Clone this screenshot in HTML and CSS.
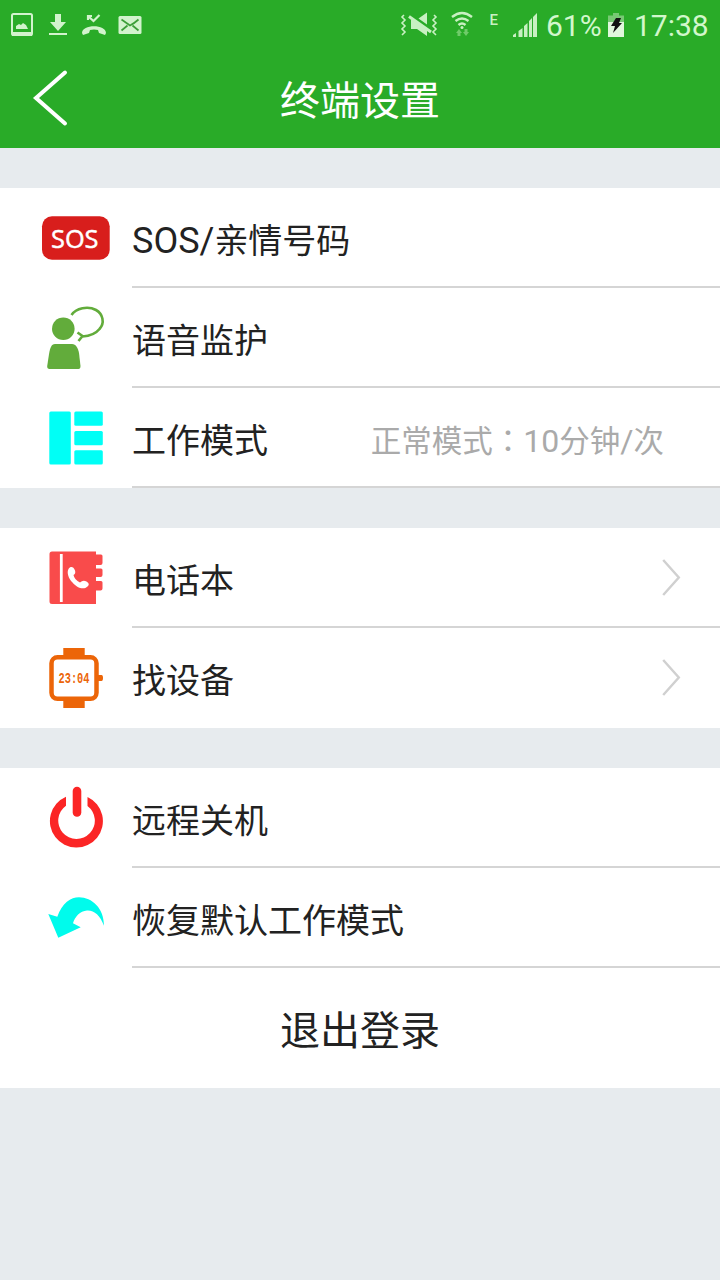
FILE: index.html
```html
<!DOCTYPE html>
<html lang="zh-CN">
<head>
<meta charset="utf-8">
<title>终端设置</title>
<link rel="stylesheet" href="styles.css">
</head>
<body>
<header class="top">
  <div class="status">
    <svg class="status-left" viewBox="0 0 160 48">
      <rect x="12" y="14" width="20" height="21" rx="1.5" fill="none" stroke="#d2f3cd" stroke-width="2"/>
      <path d="M12 32h20v4H12zM16 29v-3l3-2 2 1 2-2 3 2 2 4z" fill="#d2f3cd"/>
      <path d="M55 14h6v8h5l-8 9-8-9h5zM49 33h18v2H49z" fill="#d2f3cd"/>
      <path d="M82 33c0-9 24-9 24 0l-1 2-6-2-1-3q-4-1-8 0l-1 3-6 2z" fill="#d2f3cd"/>
      <path d="M88 20v-4h4M88.500 16.500l5 4.500 6-6" fill="none" stroke="#d2f3cd" stroke-width="2.200"/>
      <rect x="118.500" y="16" width="23" height="18" rx="1.500" fill="#d2f3cd"/>
      <path d="M121.500 19.500l8.500 6q4-2 8.500-6M121.500 30.500l6-5M138.500 30.500l-6-5" fill="none" stroke="#3c9e38" stroke-width="1.700"/>
    </svg>
    <svg class="status-right" viewBox="396 0 150 48">
      <path d="M404 15l-2 2 3 3-3 3 3 3-3 3 3 3-3 3M434 15l2 2-3 3 3 3-3 3 3 3-3 3 3 3" fill="none" stroke="#c8f0c2" stroke-width="1.600"/>
      <path d="M411 20l3 0 13 9v7l-10-7h-6zM418.500 18.500l8.500-6v12z" fill="#c8f0c2"/>
      <path d="M409 16.500l22 15.500" stroke="#c8f0c2" stroke-width="3"/>
      <g fill="none" stroke="#c8f0c2" stroke-width="2.400"><path d="M452 17q10-8 20 0M455.500 21q6.500-5 13 0M458.500 25q3.500-3 7 0"/></g>
      <circle cx="462" cy="27.500" r="1.500" fill="#c8f0c2"/>
      <path d="M456 33l3-4 3 4h-1.500v3h-3v-3zM463 32h1.500v-3h3v3h1.500l-3 4z" fill="#6fcb69"/>
      <text x="489.500" y="25" class="net">E</text>
      <path d="M513 37v-2l3-2v4zM518.500 37v-6l4-3v9zM524 37V26l3.500-3v14zM529 37V21l3-3v19zM533 37V17l4-4v24z" fill="#c8f0c2"/>
    </svg>
    <span class="percent">61%</span>
    <svg class="battery" viewBox="0 0 16 26">
      <path d="M0 2.500h5V0h6v2.500h5V12H0z" fill="#78c974"/>
      <path d="M0 9h16v15H0z" fill="#e0f7dc"/>
      <path d="M8 5h5l-2 5h3L5 20l2-7H3z" fill="#111"/>
    </svg>
    <span class="time">17:38</span>
  </div>
  <div class="nav">
    <svg class="back" viewBox="0 0 72 100"><path d="M65 24.500L36 50 65 75.500" fill="none" stroke="#fff" stroke-width="4" stroke-linecap="round"/></svg>
    <h1 class="title">终端设置</h1>
  </div>
</header>
<main class="groups">
  <section class="group">
    <div class="row">
      <svg class="icon" viewBox="0 0 72 80"><rect x="2" y="18.300" width="67.700" height="43.500" rx="10" fill="#d81e1c"/><text class="sos" x="11" y="49.500" textLength="47.500" lengthAdjust="spacingAndGlyphs">SOS</text></svg>
      <div class="cell line"><span class="label"><span class="latin">SOS/</span>亲情号码</span></div>
    </div>
    <div class="row">
      <svg class="icon" viewBox="0 0 72 80"><circle cx="23.300" cy="30.800" r="11.300" fill="#62ac3b"/><path d="M15 46h17c4 0 6 4 7 9l1.500 13q0 3-2 3h-29q-2.500 0-2.300-3l2-13c1-5 2-9 5.800-9z" fill="#62ac3b"/><path d="M31.500 17C36 10 48 7.500 56 12c7 4 9 13 3.500 19-4 5-10 7-17 7.500M37.500 34.500l5 3.500-4 5" fill="none" stroke="#62ac3b" stroke-width="2.600"/></svg>
      <div class="cell line"><span class="label">语音监护</span></div>
    </div>
    <div class="row">
      <svg class="icon" viewBox="0 0 72 80"><g fill="#00fff6"><rect x="9.300" y="13.500" width="21.500" height="53" rx="1.500"/><rect x="34.300" y="13.500" width="28.500" height="14.300" rx="1.500"/><rect x="34.300" y="33" width="28.500" height="14.300" rx="1.500"/><rect x="34.300" y="52.300" width="28.500" height="14.200" rx="1.500"/></g></svg>
      <div class="cell line"><span class="label">工作模式</span><span class="value">正常模式<span class="mid" lang="zh-TW">：</span><span class="value-latin">10</span>分钟<span class="value-latin">/</span>次</span></div>
    </div>
  </section>
  <section class="group">
    <div class="row">
      <svg class="icon" viewBox="0 0 72 80"><path d="M12 13.500h44v3h5q1.500 0 1.500 1.500v7q0 2-2 2H56v3.500h5q1.500 0 1.500 1.500v5q0 2-2 2H56v4h5q1.500 0 1.500 1.500v6q0 2-2 2H56v13.500H12q-2.500 0-2.500-2.500V16q0-2.500 2.500-2.500z" fill="#f94b4b"/><path d="M21.300 16v48" stroke="#fff" stroke-width="2.800"/><path d="M28.500 31c2-3 5-2.500 6.500 1.500q1 3-1.500 4.500 1 5 6.500 7.500 3-3 6.500-1 4 2.500 1 5c-4 4-11 1-15-4-4-4-6-10-4-13.500z" fill="#fff"/></svg>
      <div class="cell line"><span class="label">电话本</span><svg class="chevron" viewBox="0 0 24 40"><path d="M4 2l16 18L4 38" fill="none" stroke="#d0d0d0" stroke-width="2.500"/></svg></div>
    </div>
    <div class="row">
      <svg class="icon" viewBox="0 0 72 80"><path d="M23.300 10h21.400v8H23.300zM23.300 61h21.400v9H23.300zM58 37h3.500q1.500 0 1.500 3t-1.500 3H58z" fill="#ec6508"/><rect x="11.500" y="19.300" width="45" height="41.500" rx="6" fill="#fff" stroke="#ec6508" stroke-width="4.500"/><text class="clock" x="18.500" y="45" textLength="31" lengthAdjust="spacingAndGlyphs">23:04</text></svg>
      <div class="cell"><span class="label">找设备</span><svg class="chevron" viewBox="0 0 24 40"><path d="M4 2l16 18L4 38" fill="none" stroke="#d0d0d0" stroke-width="2.500"/></svg></div>
    </div>
  </section>
  <section class="group">
    <div class="row">
      <svg class="icon" viewBox="0 0 72 80"><path d="M26 18.700V27.700A18.300 18.300 0 1 0 47.500 28V19A26.500 26.500 0 1 1 26 18.700z" fill="#fb2525"/><path d="M37 13v21.500" stroke="#fb2525" stroke-width="8.600" stroke-linecap="round"/></svg>
      <div class="cell line"><span class="label">远程关机</span></div>
    </div>
    <div class="row">
      <svg class="icon" viewBox="0 0 72 80"><path d="M8.300 36l9 2.800C22 25 31 19.300 39 19.300c13 0 25 11 25 28.400C60 37 54 32 47 32.500c-7 .5-12 6-14 12.800l7.700 4-22.400 10.400z" fill="#00fbec"/></svg>
      <div class="cell line"><span class="label">恢复默认工作模式</span></div>
    </div>
    <div class="logout">退出登录</div>
  </section>
</main>
</body>
</html>
```
FILE: styles.css
```css
* { box-sizing: border-box; }
body {
  margin: 0;
  min-height: 1280px;
  background: #e7ebee;
  color: #222;
  font-family: "Noto Sans CJK SC", sans-serif;
}
svg { display: block; flex: none; }
.top { height: 148px; background: #29ab28; color: #fff; }
.status {
  display: flex;
  height: 48px;
  color: #d2f7cc;
  font: 30px/52px Roboto, sans-serif;
}
.status-left { width: 160px; height: 48px; margin-right: 236px; }
.status-right { width: 150px; height: 48px; }
.net { font: 500 15px Roboto, sans-serif; fill: #c8f0c2; }
.percent { width: 62px; white-space: nowrap; }
.battery { width: 16px; height: 26px; margin-top: 13px; }
.time { margin-left: 10px; white-space: nowrap; }
.nav { display: flex; align-items: center; height: 100px; }
.back { width: 72px; height: 100px; }
.title {
  flex: 1;
  margin: 0 72px 0 0;
  text-align: center;
  font-size: 40px;
  font-weight: 400;
  line-height: 100px;
}
.groups { display: grid; gap: 40px; padding-top: 40px; }
.group { background: #fff; }
.row { display: flex; height: 100px; padding-left: 40px; gap: 20px; }
.icon { width: 72px; height: 80px; margin-top: 10px; }
.cell {
  display: flex;
  flex: 1;
  align-items: center;
  justify-content: space-between;
  border-bottom: 2px solid transparent;
}
.line { border-bottom-color: #d5d5d5; }
.label { padding-top: 4px; font-size: 34px; line-height: 50px; }
.latin { font-family: Roboto, sans-serif; font-size: 36px; line-height: 1; }
.value {
  margin-right: 56px;
  padding-top: 3px;
  color: #aaa;
  font-size: 30.5px;
  line-height: 50px;
}
.value-latin { font-family: Roboto, sans-serif; font-size: 32px; line-height: 1; }
.mid { font-family: "Noto Sans CJK TC", sans-serif; }
.chevron { width: 24px; height: 40px; margin-right: 37px; padding-top: 1px; }
.sos { font: 26px "Open Sans", sans-serif; fill: #fff; stroke: #fff; stroke-width: .5px; }
.clock { font: bold 14.500px "Liberation Mono", monospace; fill: #ec6508; }
.logout { height: 120px; font-size: 40px; line-height: 120px; text-align: center; }
```
